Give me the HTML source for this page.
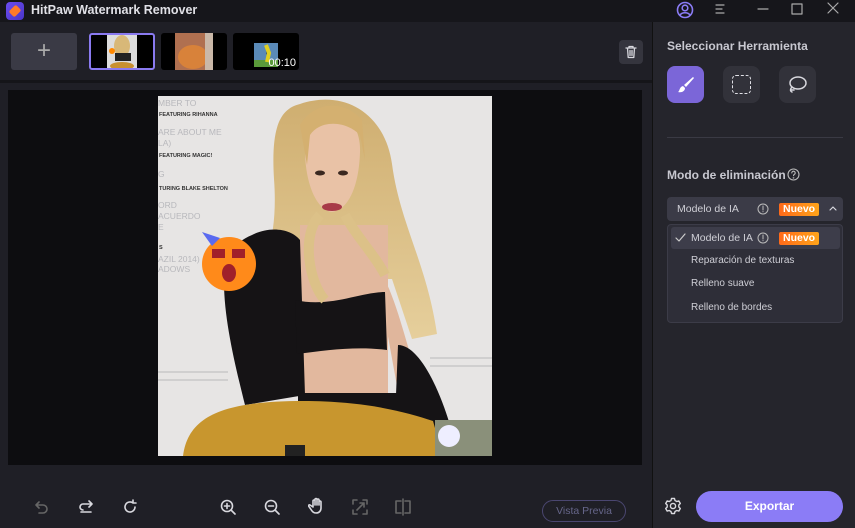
<!DOCTYPE html>
<html><head><meta charset="utf-8">
<style>
*{margin:0;padding:0;box-sizing:border-box}
body{width:855px;height:528px;overflow:hidden;background:#1f1f26;font-family:"Liberation Sans",sans-serif;color:#ddd;position:relative}
.abs{position:absolute}
.title{left:0;top:0;width:855px;height:22px;background:#16161b}
.left{left:0;top:22px;width:652px;height:506px;background:#1f1f26}
.right{left:653px;top:22px;width:202px;height:506px;background:#25252c}
.sep{left:652px;top:22px;width:1px;height:506px;background:#111}
.thumb{top:33px;height:37px;border-radius:3px;background:#000;overflow:hidden}
.tool{width:37px;height:37px;border-radius:8px;background:#32323a;top:66px}
.menu{font-size:10.5px;color:#cfcfd6}
.badge{background:linear-gradient(90deg,#ff6a1a,#ffa41a);color:#fff;font-weight:bold;font-size:10.5px;padding:0 4px;border-radius:2px;line-height:13px}
svg.i{position:absolute;fill:none;stroke:#d8d8de;stroke-width:1.6;stroke-linecap:round;stroke-linejoin:round}
</style></head><body>
<div class="abs title"></div>
<div class="abs" style="left:6px;top:2px;width:18px;height:18px;border-radius:4px;background:linear-gradient(135deg,#6a4cf0,#4a35c8)"></div>
<div class="abs" style="left:11px;top:6px;width:8px;height:10px;background:#ff7a2a;transform:rotate(45deg);border-radius:2px"></div>
<div class="abs" style="left:31px;top:3px;font-size:12.5px;font-weight:bold;color:#e0e0e6">HitPaw Watermark Remover</div>
<svg class="i" style="left:676px;top:1px;stroke:#8b7cf6" width="18" height="18" viewBox="0 0 18 18"><circle cx="9" cy="9" r="7.5"/><circle cx="9" cy="7" r="2.8"/><path d="M4 14c2-3 8-3 10 0"/></svg>
<svg class="i" style="left:713px;top:2px;stroke-width:1.2;stroke:#aaa" width="14" height="14" viewBox="0 0 14 14"><path d="M3 3h8M3 7h6M3 11h8"/></svg>
<svg class="i" style="left:756px;top:2px;stroke-width:1.2;stroke:#aaa" width="14" height="14" viewBox="0 0 14 14"><path d="M2 7h10"/></svg>
<svg class="i" style="left:790px;top:2px;stroke-width:1.2;stroke:#aaa" width="14" height="14" viewBox="0 0 14 14"><rect x="2" y="2" width="10" height="10"/></svg>
<svg class="i" style="left:826px;top:1px;stroke-width:1.2;stroke:#aaa" width="14" height="14" viewBox="0 0 14 14"><path d="M2 2l10 10M12 2L2 12"/></svg>

<div class="abs left"></div>
<div class="abs" style="left:11px;top:33px;width:66px;height:37px;border-radius:3px;background:#3a3a45;color:#aaa;font-size:24px;text-align:center;line-height:35px;font-weight:300">+</div>
<div class="abs thumb" style="left:89px;width:66px;border:2px solid #8a7af0">
<svg width="62" height="33"><rect x="16" y="0" width="30" height="33" fill="#ddd"/><ellipse cx="31" cy="11" rx="8" ry="11" fill="#d8b878"/><rect x="24" y="18" width="16" height="8" fill="#222"/><ellipse cx="31" cy="31" rx="12" ry="4" fill="#c89030"/><circle cx="21" cy="16" r="3" fill="#f80"/></svg></div>
<div class="abs thumb" style="left:161px;width:66px"><svg width="66" height="37"><rect x="14" y="0" width="38" height="37" fill="#b07050"/><ellipse cx="32" cy="24" rx="15" ry="12" fill="#d8823a"/><rect x="44" y="0" width="8" height="37" fill="#cab8a8"/></svg></div>
<div class="abs thumb" style="left:233px;width:66px"><svg width="66" height="37"><rect x="21" y="10" width="24" height="24" fill="#5a8ab8"/><rect x="21" y="27" width="24" height="7" fill="#5a9a3a"/><path d="M33 12l3 8-2 9" stroke="#e0d020" stroke-width="4"/></svg>
<div class="abs" style="right:3px;bottom:1px;font-size:11px;color:#fff">00:10</div></div>
<div class="abs" style="left:619px;top:40px;width:24px;height:24px;border-radius:4px;background:#35353e"></div>
<svg class="i" style="left:624px;top:45px;stroke-width:1.3" width="14" height="14" viewBox="0 0 14 14"><path d="M2 3h10M5 3V1.5h4V3M3.5 3l.7 9.5h5.6L10.5 3M6 5.5v5M8 5.5v5"/></svg>
<div class="abs" style="left:0;top:80px;width:652px;height:3px;background:#151519"></div>

<div class="abs" style="left:8px;top:90px;width:634px;height:375px;background:#0d0d10"></div>
<svg class="abs" style="left:158px;top:96px" width="334" height="360" viewBox="158 96 334 360">
<defs><linearGradient id="hg" x1="0" y1="0" x2="0" y2="1"><stop offset="0" stop-color="#cfae70"/><stop offset="1" stop-color="#e6cf9c"/></linearGradient></defs>
<rect x="158" y="96" width="334" height="360" fill="#e7e5e4"/>
<path d="M158 372h70M158 380h70M430 358h62M430 366h62" stroke="#d0cfcf" stroke-width="2"/>
<path d="M300 104c45-15 85 10 92 60 8 60 35 100 45 170l-25 5-20-60-90 0-20 20-30-20c20-20 25-60 22-100-3-50 5-70 26-75z" fill="url(#hg)"/>
<path d="M385 280c15 30 25 80 40 120l20 30-40 0-20-110z" fill="#e0b69c"/>
<path d="M300 225h88l0 170h-88z" fill="#e2b89e"/>
<path d="M305 150c0-25 15-38 28-38s28 15 27 40c-1 35-12 58-28 60-16-2-27-30-27-62z" fill="#e9c2a6"/>
<path d="M300 125c15-25 45-25 62 -5l3 40-5-25c-15-15-40-15-50 0l-3 30z" fill="#d4b070"/>
<ellipse cx="320" cy="173" rx="5" ry="2.5" fill="#3a2820"/><ellipse cx="343" cy="173" rx="5" ry="2.5" fill="#3a2820"/>
<ellipse cx="332" cy="207" rx="10" ry="4" fill="#a83a48"/>
<path d="M252 235c20-10 40-5 48 5l5 155-60 10c-10-40-25-100-20-140 2-15 15-25 27-30z" fill="#151315"/>
<path d="M398 345c20 0 40 40 52 80l-20 15-35-20z" fill="#151315"/>
<path d="M295 300c35 8 65-8 90-8l2 58c-30-4-60 0-90 4z" fill="#151315"/>
<rect x="298" y="393" width="100" height="48" fill="#151315"/>
<path d="M320 215c-20 20-10 70 5 85M345 215c10 20 30 40 40 60" stroke="#dcc188" stroke-width="10" fill="none"/>
<path d="M183 456c5-40 40-55 120-55 60 0 100 10 130 20l10 35z" fill="#c8962e"/>
<rect x="285" y="445" width="20" height="11" fill="#222"/>
<rect x="435" y="420" width="57" height="36" fill="#8a907a"/><circle cx="449" cy="436" r="11" fill="#eef"/>
<g fill="#b8b8bc" font-size="8.5"><text x="158" y="106">MBER TO</text><text x="158" y="135">ARE ABOUT ME</text><text x="158" y="146">LA)</text><text x="158" y="177">G</text><text x="158" y="208">ORD</text><text x="158" y="219">ACUERDO</text><text x="158" y="230">E</text><text x="158" y="262">AZIL 2014)</text><text x="158" y="272">ADOWS</text></g>
<g fill="#333" font-size="5.5" font-weight="bold"><text x="159" y="116">FEATURING RIHANNA</text><text x="159" y="157">FEATURING MAGIC!</text><text x="159" y="190">TURING BLAKE SHELTON</text><text x="159" y="249">S</text></g>
<circle cx="229" cy="264" r="27" fill="#ff8a1a"/>
<path d="M202 232l10 14 8-8z" fill="#5a6af0"/>
<rect x="212" y="249" width="13" height="9" fill="#a0202a"/><rect x="232" y="249" width="13" height="9" fill="#a0202a"/>
<ellipse cx="229" cy="273" rx="7" ry="9" fill="#a0202a"/>
</svg>

<svg class="i" style="left:34px;top:499px;stroke:#666" width="16" height="16" viewBox="0 0 16 16"><path d="M5 3L2 6l3 3M2 6h7a4 4 0 010 8H5"/></svg>
<svg class="i" style="left:78px;top:499px" width="16" height="16" viewBox="0 0 16 16"><path d="M11 2l3 3-3 3M14 5H5a3 3 0 000 6M3 13h10"/></svg>
<svg class="i" style="left:122px;top:499px" width="16" height="16" viewBox="0 0 16 16"><path d="M13 8a5 5 0 11-2-4M11 1v3h3"/></svg>
<svg class="i" style="left:220px;top:499px" width="17" height="17" viewBox="0 0 17 17"><circle cx="7" cy="7" r="5.5"/><path d="M11 11l4 4M7 4.5v5M4.5 7h5"/></svg>
<svg class="i" style="left:264px;top:499px" width="17" height="17" viewBox="0 0 17 17"><circle cx="7" cy="7" r="5.5"/><path d="M11 11l4 4M4.5 7h5"/></svg>
<svg class="i" style="left:308px;top:497px" width="18" height="18" viewBox="0 0 18 18"><path d="M5 10V4a1 1 0 012 0v4V2.5a1 1 0 012 0V8V3a1 1 0 012 0v5V5a1 1 0 012 0v6c0 3-2 5-5 5s-4-2-6-5l-1.5-2a1 1 0 011.5-1z"/></svg>
<svg class="i" style="left:351px;top:498px;stroke:#666" width="18" height="18" viewBox="0 0 18 18"><path d="M2 6V2h4M12 2h4v4M16 12v4h-4M6 16H2v-4M6 12l7-7M9 5h4v4"/></svg>
<svg class="i" style="left:394px;top:498px;stroke:#666" width="18" height="18" viewBox="0 0 18 18"><path d="M9 1v16M7 3H2v12h5M11 3h5v12h-5"/></svg>
<div class="abs" style="left:542px;top:500px;width:84px;height:22px;border:1px solid #4a4670;border-radius:11px;color:#66668a;font-size:10.5px;text-align:center;line-height:20px">Vista Previa</div>

<div class="abs sep"></div>
<div class="abs right"></div>
<div class="abs" style="left:667px;top:39px;font-size:12px;font-weight:bold;color:#c8c8d0">Seleccionar Herramienta</div>
<div class="abs tool" style="left:667px;background:#7b66d8"></div>
<svg class="abs" style="left:676px;top:75px" width="20" height="20" viewBox="0 0 20 20"><path d="M17 2l1 1-8 9-2-2z" fill="#fff"/><path d="M7 11l2 2c0 3-3 5-7 4 2-1 1-5 5-6z" fill="#fff"/></svg>
<div class="abs tool" style="left:723px"></div>
<div class="abs" style="left:732px;top:75px;width:19px;height:19px;border:1.6px dashed #e0e0e6;border-radius:4px"></div>
<div class="abs tool" style="left:779px"></div>
<svg class="i" style="left:786px;top:74px;stroke-width:1.5" width="22" height="22" viewBox="0 0 22 22"><ellipse cx="12" cy="9" rx="8" ry="6"/><path d="M6 13c-2 2-2 4 0 5M5 16l3 0"/></svg>
<div class="abs" style="left:667px;top:137px;width:176px;height:1px;background:#3a3a44"></div>
<div class="abs" style="left:667px;top:168px;font-size:12px;font-weight:bold;color:#c8c8d0">Modo de eliminación</div>
<svg class="i" style="left:787px;top:168px;stroke-width:1.1;stroke:#bbb" width="13" height="13" viewBox="0 0 13 13"><circle cx="6.5" cy="6.5" r="5.5"/><path d="M4.8 5a1.7 1.7 0 113 1c-.8.5-1.3.8-1.3 1.7"/><circle cx="6.5" cy="9.8" r=".3"/></svg>
<div class="abs" style="left:667px;top:197px;width:176px;height:24px;border-radius:4px;background:#3b3b47"></div>
<div class="abs menu" style="left:677px;top:203px">Modelo de IA</div>
<svg class="i" style="left:757px;top:203px;stroke-width:1;stroke:#bbb" width="12" height="12" viewBox="0 0 12 12"><circle cx="6" cy="6" r="5"/><path d="M6 3v4M6 8.5v.3"/></svg>
<div class="abs badge" style="left:779px;top:203px">Nuevo</div>
<svg class="i" style="left:828px;top:205px;stroke-width:1.2" width="10" height="8" viewBox="0 0 10 8"><path d="M2 5l3-3 3 3"/></svg>
<div class="abs" style="left:667px;top:224px;width:176px;height:99px;border-radius:4px;background:#2e2e38;border:1px solid #3c3c48"></div>
<div class="abs" style="left:671px;top:227px;width:169px;height:22px;border-radius:3px;background:#3d3d4a"></div>
<svg class="i" style="left:675px;top:233px;stroke-width:1.2;stroke:#ccc" width="11" height="10" viewBox="0 0 11 10"><path d="M1 5l3 3 6-7"/></svg>
<div class="abs menu" style="left:691px;top:232px">Modelo de IA</div>
<svg class="i" style="left:757px;top:232px;stroke-width:1;stroke:#bbb" width="12" height="12" viewBox="0 0 12 12"><circle cx="6" cy="6" r="5"/><path d="M6 3v4M6 8.5v.3"/></svg>
<div class="abs badge" style="left:779px;top:232px">Nuevo</div>
<div class="abs menu" style="left:691px;top:255px;font-size:10px">Reparación de texturas</div>
<div class="abs menu" style="left:691px;top:278px;font-size:10px">Relleno suave</div>
<div class="abs menu" style="left:691px;top:302px;font-size:10px">Relleno de bordes</div>
<svg class="i" style="left:664px;top:497px;stroke-width:1.4" width="18" height="18" viewBox="0 0 18 18"><circle cx="9" cy="9" r="2.6"/><path d="M7.5 1.5h3l.5 2 1.8 1 2-.6 1.5 2.6-1.5 1.5v2l1.5 1.5-1.5 2.6-2-.6-1.8 1-.5 2h-3l-.5-2-1.8-1-2 .6-1.5-2.6 1.5-1.5v-2L1.7 6.5l1.5-2.6 2 .6 1.8-1z"/></svg>
<div class="abs" style="left:696px;top:491px;width:147px;height:31px;border-radius:16px;background:#8b7cf6;color:#fff;font-weight:bold;font-size:12px;text-align:center;line-height:31px">Exportar</div>
</body></html>
